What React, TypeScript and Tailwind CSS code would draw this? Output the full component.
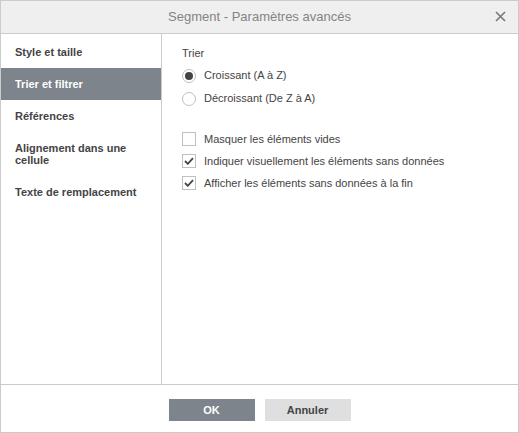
import { useState } from "react";

const tabs = [
  "Style et taille",
  "Trier et filtrer",
  "Références",
  "Alignement dans une cellule",
  "Texte de remplacement",
];

const Radio = ({ checked, label }: { checked: boolean; label: string }) => (
  <label className="flex items-center h-[23px] gap-[8px]">
    <span className="w-[14px] h-[14px] rounded-full border border-[#c0c0c0] bg-white flex items-center justify-center">
      {checked && <span className="w-[8px] h-[8px] rounded-full bg-[#444]" />}
    </span>
    <span>{label}</span>
  </label>
);

const Check = ({ checked, label }: { checked: boolean; label: string }) => (
  <label className="flex items-center h-[22px] gap-[8px]">
    <span className="w-[14px] h-[14px] border border-[#c0c0c0] bg-white flex items-center justify-center">
      {checked && (
        <svg width="10" height="8" viewBox="0 0 10 8">
          <path d="M1 4 L3.8 6.8 L9 1.2" fill="none" stroke="#444" strokeWidth="1.8" />
        </svg>
      )}
    </span>
    <span>{label}</span>
  </label>
);

export default function App() {
  const [active, setActive] = useState(1);

  return (
    <div
      className="w-[519px] h-[433px] border border-[#cbcbcb] bg-white flex flex-col text-[11px] text-[#444]"
      style={{ fontFamily: '"Liberation Sans", Arial, sans-serif' }}
    >
      {/* header */}
      <div className="h-[33px] shrink-0 bg-[#efefef] border-b border-[#cbcbcb] flex items-center justify-center relative">
        <span className="text-[13px] text-[#848484]">Segment - Paramètres avancés</span>
        <svg className="absolute right-[12px] top-[10px]" width="11" height="11" viewBox="0 0 11 11">
          <path d="M1 1 L10 10 M10 1 L1 10" stroke="#777" strokeWidth="1.6" />
        </svg>
      </div>

      <div className="flex flex-1 min-h-0">
        {/* sidebar */}
        <div className="w-[161px] shrink-0 border-r border-[#cbcbcb] pt-[2px] flex flex-col">
          {tabs.map((t, i) => (
            <div
              key={t}
              onClick={() => setActive(i)}
              className={
                "px-[14px] py-[10px] leading-[12px] font-bold cursor-pointer " +
                (i === active ? "bg-[#7d848b] text-white" : "text-[#444]")
              }
            >
              {i === 3 ? (
                <>
                  Alignement dans une
                  <br />
                  cellule
                </>
              ) : (
                t
              )}
            </div>
          ))}
        </div>

        {/* content */}
        <div className="flex-1 pl-[20px] pt-[12px]">
          <div className="h-[14px] leading-[14px] mb-[4px]">Trier</div>
          <Radio checked label="Croissant (A à Z)" />
          <Radio checked={false} label="Décroissant (De Z à A)" />
          <div className="h-[18px]" />
          <Check checked={false} label="Masquer les éléments vides" />
          <Check checked label="Indiquer visuellement les éléments sans données" />
          <Check checked label="Afficher les éléments sans données à la fin" />
        </div>
      </div>

      {/* footer */}
      <div className="h-[48px] shrink-0 border-t border-[#cbcbcb] flex justify-center gap-[10px] pt-[14px]">
        <button className="w-[86px] h-[22px] bg-[#7d848b] text-white font-bold text-[11px]">OK</button>
        <button className="w-[86px] h-[22px] bg-[#dfdfdf] text-[#444] font-bold text-[11px]">Annuler</button>
      </div>
    </div>
  );
}
